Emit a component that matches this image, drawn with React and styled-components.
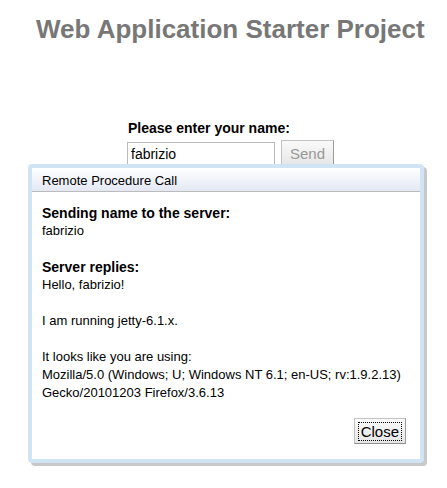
import styled, { createGlobalStyle } from "styled-components";

const GlobalStyle = createGlobalStyle`
  html, body {
    margin: 0;
    padding: 0;
    background: #ffffff;
    font-family: "Liberation Sans", Arial, sans-serif;
  }
`;

const Page = styled.div`
  position: relative;
  width: 447px;
  height: 488px;
  overflow: hidden;
`;

const Title = styled.h1`
  margin: 0;
  padding: 14px 0 0 36px;
  font-size: 26px;
  font-weight: bold;
  color: #777777;
  white-space: nowrap;
`;

const Form = styled.div`
  display: flex;
  flex-direction: column;
  margin: 75px 0 0 127px;
  gap: 4px;
`;

const FormLabel = styled.div`
  font-size: 14px;
  font-weight: bold;
  color: #000;
  padding-left: 1px;
`;

const Row = styled.div`
  display: flex;
  align-items: flex-start;
  gap: 6px;
`;

const NameInput = styled.input`
  box-sizing: border-box;
  width: 148px;
  height: 24px;
  margin: 2px 0 0;
  padding: 1px 3px;
  border: 1px solid #bbbbbb;
  font-family: "Liberation Sans", Arial, sans-serif;
  font-size: 14px;
  color: #000;
  outline: none;
`;

const Button = styled.button`
  box-sizing: border-box;
  height: ${(p) => p.h}px;
  padding: 0 ${(p) => p.px}px;
  border: 1px solid #c2c2c2;
  border-right-color: #9a9a9a;
  border-bottom-color: #8e8e8e;
  background: linear-gradient(#fafafa, #e6e6e6);
  font-family: "Liberation Sans", Arial, sans-serif;
  font-size: 15px;
  color: ${(p) => (p.disabled ? "#999999" : "#000")};
  cursor: default;
`;

const FocusRing = styled.span`
  display: inline-block;
  padding: 0 2px;
  border: 1px dotted #000;
  line-height: 17px;
`;

const Dialog = styled.div`
  position: absolute;
  left: 28px;
  top: 164px;
  width: 396px;
  box-sizing: border-box;
  border: 4px solid #d0e4f6;
  border-radius: 4px;
  background: #ffffff;
  box-shadow: 3px 3px 0 #c8c8c8;
`;

const Caption = styled.div`
  padding: 4px 10px 1px;
  border-bottom: 1px solid #bbbbbb;
  background: linear-gradient(#ffffff, #e3e8f3);
  font-size: 13px;
  line-height: 18px;
  color: #000;
`;

const Content = styled.div`
  display: flex;
  flex-direction: column;
  padding: 12px 10px 15px;
  font-size: 13px;
  line-height: 18px;
  color: #000;
`;

const Heading = styled.b`
  display: block;
  font-size: 14px;
  font-weight: bold;
  margin-top: ${(p) => (p.gap ? 18 : 0)}px;
`;

const Text = styled.div`
  margin-top: ${(p) => (p.gap ? 18 : 0)}px;
`;

const Footer = styled.div`
  display: flex;
  justify-content: flex-end;
  margin-top: 16px;
  padding-right: 4px;
`;

export default function App() {
  return (
    <Page>
      <GlobalStyle />
      <Title>Web Application Starter Project</Title>
      <Form>
        <FormLabel>Please enter your name:</FormLabel>
        <Row>
          <NameInput defaultValue="fabrizio" />
          <Button disabled h={26} px={8}>
            Send
          </Button>
        </Row>
      </Form>
      <Dialog>
        <Caption>Remote Procedure Call</Caption>
        <Content>
          <Heading>Sending name to the server:</Heading>
          <Text>fabrizio</Text>
          <Heading gap>Server replies:</Heading>
          <Text>Hello, fabrizio!</Text>
          <Text gap>I am running jetty-6.1.x.</Text>
          <Text gap>
            It looks like you are using:
            <br />
            Mozilla/5.0 (Windows; U; Windows NT 6.1; en-US; rv:1.9.2.13)
            Gecko/20101203 Firefox/3.6.13
          </Text>
          <Footer>
            <Button h={26} px={3}>
              <FocusRing>Close</FocusRing>
            </Button>
          </Footer>
        </Content>
      </Dialog>
    </Page>
  );
}
